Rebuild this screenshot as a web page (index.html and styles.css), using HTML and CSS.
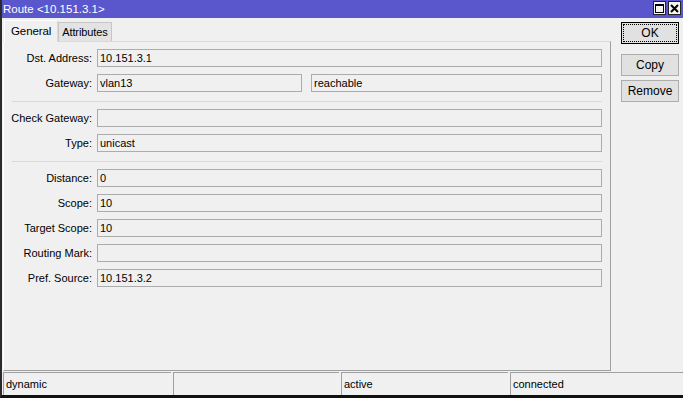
FILE: index.html
```html
<!DOCTYPE html>
<html lang="en">
<head>
    <meta charset="UTF-8">
    <meta name="viewport" content="width=device-width, initial-scale=1.0">
    <title>Route</title>
    <link rel="stylesheet" href="styles.css">
</head>
<body>
    <div class="ventana">
        <div class="titulo">
            <span class="titulo-texto">Route &lt;10.151.3.1&gt;</span>
            <div class="controles">
                <span class="control">
                    <svg width="11" height="11" viewBox="0 0 11 11"><rect x="1.5" y="1.5" width="8" height="8" fill="none" stroke="#000" stroke-width="1"/><rect x="1" y="1" width="9" height="2" fill="#000"/></svg>
                </span>
                <span class="control">
                    <svg width="11" height="11" viewBox="0 0 11 11"><path d="M2 2 L9 9 M9 2 L2 9" stroke="#000" stroke-width="2"/></svg>
                </span>
            </div>
        </div>

        <div class="cuerpo">
            <div class="izquierda">
                <div class="pestanas">
                    <div class="pestana activa">General</div>
                    <div class="pestana">Attributes</div>
                </div>
                <div class="panel">
                    <div class="fila"><label>Dst. Address:</label><div class="campo">10.151.3.1</div></div>
                    <div class="fila">
                        <label>Gateway:</label>
                        <div class="campo corto">vlan13</div>
                        <div class="campo extra">reachable</div>
                    </div>
                    <div class="separador"></div>
                    <div class="fila"><label>Check Gateway:</label><div class="campo"></div></div>
                    <div class="fila"><label>Type:</label><div class="campo">unicast</div></div>
                    <div class="separador"></div>
                    <div class="fila"><label>Distance:</label><div class="campo">0</div></div>
                    <div class="fila"><label>Scope:</label><div class="campo">10</div></div>
                    <div class="fila"><label>Target Scope:</label><div class="campo">10</div></div>
                    <div class="fila"><label>Routing Mark:</label><div class="campo"></div></div>
                    <div class="fila"><label>Pref. Source:</label><div class="campo">10.151.3.2</div></div>
                </div>
            </div>
            <div class="botones">
                <button class="boton por-defecto"><span>OK</span></button>
                <button class="boton copiar">Copy</button>
                <button class="boton">Remove</button>
            </div>
        </div>

        <div class="estado">
            <div class="celda">dynamic</div>
            <div class="celda"></div>
            <div class="celda">active</div>
            <div class="celda">connected</div>
        </div>
    </div>
</body>
</html>
```

FILE: styles.css
```css
body {
    margin: 0;
    font-family: "Liberation Sans", Arial, sans-serif;
    font-size: 11px;
    color: #000;
    background-color: #f0f0f0;
}
.ventana {
    width: 681px;
    height: 395px;
    border-left: 2px solid #2a2a2a;
    border-bottom: 3px solid #111;
    background-color: #f0f0f0;
    display: flex;
    flex-direction: column;
    overflow: hidden;
}
.titulo {
    height: 18px;
    flex-shrink: 0;
    background-color: #5a56cc;
    display: flex;
    align-items: center;
    justify-content: space-between;
    padding-left: 1px;
}
.titulo-texto {
    color: #fff;
    font-size: 11.5px;
}
.controles {
    display: flex;
    gap: 2px;
    padding-right: 2px;
    align-self: flex-start;
    margin-top: 1px;
}
.control {
    width: 13px;
    height: 14px;
    background-color: #f4f4f4;
    border: 1px solid #222;
    box-sizing: border-box;
    display: flex;
    align-items: center;
    justify-content: center;
}
.cuerpo {
    height: 353px;
    flex-shrink: 0;
    display: flex;
}
.izquierda {
    width: 608px;
    padding-left: 1px;
}
.pestanas {
    height: 23px;
    display: flex;
    align-items: flex-end;
    padding-left: 1px;
}
.pestana {
    height: 18px;
    line-height: 18px;
    padding: 0 3px;
    background-color: #e3e3e3;
    border: 1px solid #c6c6c6;
    border-bottom: none;
    letter-spacing: -0.1px;
}
.pestana.activa {
    height: 21px;
    line-height: 20px;
    padding: 0 6px;
    font-size: 11.5px;
    background-color: #f0f0f0;
    border-color: #d9d9d9;
    border-left-color: #fff;
    border-top-color: #fff;
    position: relative;
    z-index: 1;
    margin-bottom: -1px;
}
.panel {
    height: 330px;
    box-sizing: border-box;
    border: 1px solid #a0a0a0;
    border-top-color: #d9d9d9;
    border-left-color: #fff;
    padding: 7px 8px 0 0;
}
.fila {
    display: flex;
    height: 18px;
    margin-bottom: 7px;
}
.fila label {
    width: 88px;
    flex-shrink: 0;
    margin-right: 5px;
    text-align: right;
    line-height: 18px;
}
.campo {
    flex: 1;
    height: 18px;
    box-sizing: border-box;
    border: 1px solid #acacac;
    background-color: #f0f0f0;
    padding-left: 2px;
    line-height: 16px;
}
.campo.corto {
    flex: none;
    width: 205px;
}
.campo.extra {
    margin-left: 9px;
}
.separador {
    height: 1px;
    background-color: #d9d9d9;
    margin: 9px 0 7px 8px;
}
.botones {
    display: flex;
    flex-direction: column;
    margin-left: 10px;
    padding-top: 4px;
}
.boton {
    width: 58px;
    height: 22px;
    margin: 0 0 4px 0;
    font-family: "Liberation Sans", Arial, sans-serif;
    font-size: 12px;
    background-color: #e1e1e1;
    border: 1px solid #adadad;
    padding: 0;
}
.por-defecto {
    height: 22px;
    border: 1px solid #000;
    padding: 1px;
}
.por-defecto span {
    display: block;
    height: 100%;
    line-height: 16px;
    border: 1px dotted #000;
    box-sizing: border-box;
}
.copiar {
    margin-top: 6px;
}
.estado {
    height: 23px;
    flex-shrink: 0;
    display: grid;
    grid-template-columns: 168px 166px 167px 1fr;
    gap: 2px;
    padding-left: 1px;
    margin-top: 1px;
}
.celda {
    border-top: 1px solid #a0a0a0;
    border-left: 1px solid #a0a0a0;
    padding-left: 2px;
    line-height: 22px;
}
```
